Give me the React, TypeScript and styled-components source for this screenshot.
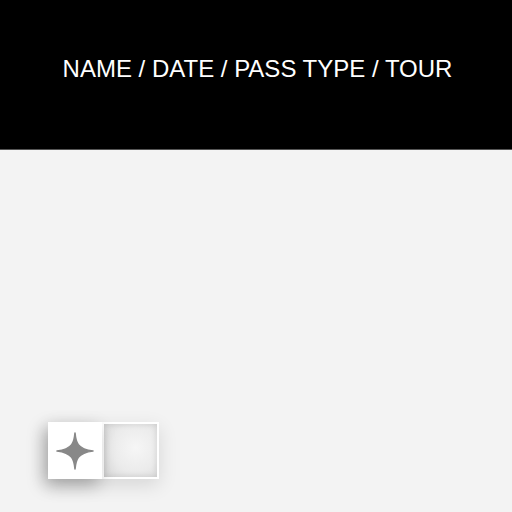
import React from "react";
import styled, { createGlobalStyle } from "styled-components";

const Global = createGlobalStyle`
  html, body { margin: 0; padding: 0; background: #f3f3f3; }
  body { width: 512px; height: 512px; overflow: hidden; font-family: "Liberation Sans", Arial, sans-serif; }
`;

const Page = styled.div`
  width: 512px;
  height: 512px;
  display: flex;
  flex-direction: column;
  background: #f3f3f3;
`;

const Header = styled.header`
  height: 150px;
  background: #000;
  border-bottom: 1px solid #555;
  display: flex;
  justify-content: center;
  padding-top: 56px;
  box-sizing: border-box;
`;

const Title = styled.h1`
  margin: 0;
  color: #fff;
  font-family: "Liberation Sans", Arial, sans-serif;
  font-weight: 400;
  font-size: 24px;
  line-height: 26px;
  letter-spacing: 0;
  padding-left: 3px;
`;

const Body = styled.main`
  flex: 1;
  display: flex;
  flex-direction: column;
  justify-content: flex-end;
  padding: 0 0 33px 48px;
`;

const Toggle = styled.div`
  display: flex;
  width: 111px;
  height: 57px;
  background: #fff;
  box-shadow: 0 6px 18px rgba(0, 0, 0, 0.12);
`;

const Cell = styled.div<{ $active?: boolean }>`
  flex: 1;
  display: flex;
  align-items: center;
  justify-content: center;
  background: #fff;
  ${(p) =>
    p.$active
      ? `box-shadow: -4px 6px 16px rgba(0,0,0,0.28); position: relative; z-index: 1;`
      : `border: 2px solid #fff; background: radial-gradient(circle at 60% 45%, #f6f6f6 0%, #ebebeb 55%, #d9d9d9 100%); box-shadow: inset 0 0 6px rgba(0,0,0,0.12);`}
`;

const Star = () => (
  <svg width="38" height="38" viewBox="0 0 38 38">
    <path
      d="M19 1 C19.8 10 21 17 37 19 C21 21 19.8 28 19 37 C18.2 28 17 21 1 19 C17 17 18.2 10 19 1 Z"
      fill="#888"
      stroke="#888"
      strokeWidth="1.6"
      strokeLinejoin="round"
    />
  </svg>
);

export default function App() {
  return (
    <>
      <Global />
      <Page>
        <Header>
          <Title>NAME / DATE / PASS TYPE / TOUR</Title>
        </Header>
        <Body>
          <Toggle>
            <Cell $active>
              <Star />
            </Cell>
            <Cell />
          </Toggle>
        </Body>
      </Page>
    </>
  );
}
